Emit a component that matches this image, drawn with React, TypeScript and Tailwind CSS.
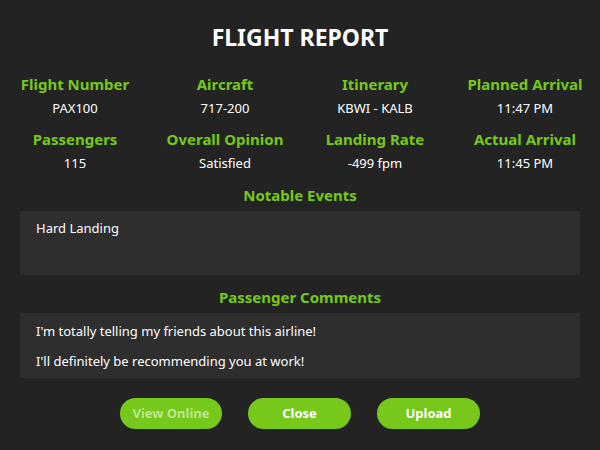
const stats = [
  { label: "Flight Number", value: "PAX100" },
  { label: "Aircraft", value: "717-200" },
  { label: "Itinerary", value: "KBWI - KALB" },
  { label: "Planned Arrival", value: "11:47 PM" },
  { label: "Passengers", value: "115" },
  { label: "Overall Opinion", value: "Satisfied" },
  { label: "Landing Rate", value: "-499 fpm" },
  { label: "Actual Arrival", value: "11:45 PM" },
];

const comments = [
  "I'm totally telling my friends about this airline!",
  "I'll definitely be recommending you at work!",
];

export default function App() {
  return (
    <div
      className="w-[600px] h-[450px] bg-[#232323] text-white flex flex-col overflow-hidden"
      style={{ fontFamily: '"Noto Sans", "Open Sans", sans-serif' }}
    >
      <h1 className="text-[23px] font-bold text-center leading-[30px] mt-[22px]">FLIGHT REPORT</h1>

      <div className="grid grid-cols-4 gap-y-[12px] mt-[22px] text-center">
        {stats.map((s) => (
          <div key={s.label} className="flex flex-col">
            <div className="text-[#76c81b] font-bold text-[15px] leading-[20px]">{s.label}</div>
            <div className="text-[13px] leading-[18px] mt-[5px]">{s.value}</div>
          </div>
        ))}
      </div>

      <div className="px-5 mt-[13px]">
        <div className="text-[#76c81b] font-bold text-[15px] leading-[20px] text-center">Notable Events</div>
        <div className="bg-[#2e2e2e] h-[64px] mt-[6px] px-4 pt-[8px] text-[13px] leading-[18px]">
          Hard Landing
        </div>

        <div className="text-[#76c81b] font-bold text-[15px] leading-[20px] text-center mt-[12px]">
          Passenger Comments
        </div>
        <div className="bg-[#2e2e2e] h-[65px] mt-[6px] px-4 pt-[9px] text-[13px] leading-[18px] flex flex-col gap-[12px] overflow-hidden">
          {comments.map((c) => (
            <div key={c}>{c}</div>
          ))}
        </div>
      </div>

      <div className="flex justify-center gap-[26px] mt-[20px]">
        <button className="w-[102px] h-[31px] rounded-full bg-[#76c81b] text-[#bde68e] font-bold text-[13px]">
          View Online
        </button>
        <button className="w-[103px] h-[31px] rounded-full bg-[#76c81b] text-white font-bold text-[13px]">
          Close
        </button>
        <button className="w-[103px] h-[31px] rounded-full bg-[#76c81b] text-white font-bold text-[13px]">
          Upload
        </button>
      </div>
    </div>
  );
}
